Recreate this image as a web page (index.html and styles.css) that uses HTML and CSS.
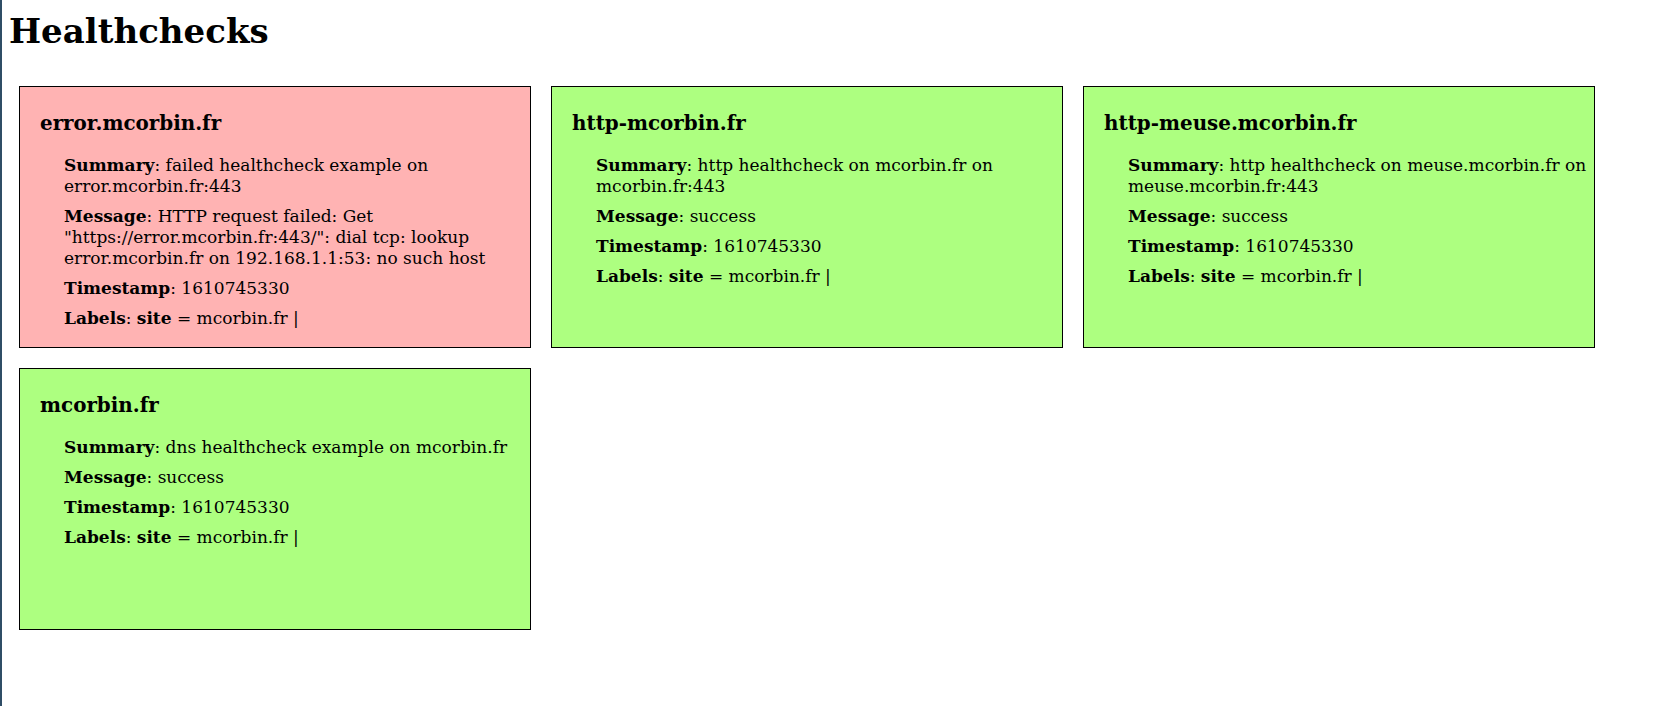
FILE: index.html
```html
<!DOCTYPE html>
<html>
<head>
<meta charset="utf-8">
<title>Healthchecks</title>
<link rel="stylesheet" href="styles.css">
</head>
<body>
<h1 class="title">Healthchecks</h1>
<div class="grid">
  <div class="card card-failure">
    <h3 class="card-name">error.mcorbin.fr</h3>
    <ul class="fields">
      <li><b>Summary</b>: failed healthcheck example on error.mcorbin.fr:443</li>
      <li><b>Message</b>: HTTP request failed: Get "https://error.mcorbin.fr:443/": dial tcp: lookup error.mcorbin.fr on 192.168.1.1:53: no such host</li>
      <li><b>Timestamp</b>: 1610745330</li>
      <li><b>Labels</b>: <b>site</b> = mcorbin.fr |</li>
    </ul>
  </div>
  <div class="card card-success">
    <h3 class="card-name">http-mcorbin.fr</h3>
    <ul class="fields">
      <li><b>Summary</b>: http healthcheck on mcorbin.fr on mcorbin.fr:443</li>
      <li><b>Message</b>: success</li>
      <li><b>Timestamp</b>: 1610745330</li>
      <li><b>Labels</b>: <b>site</b> = mcorbin.fr |</li>
    </ul>
  </div>
  <div class="card card-success">
    <h3 class="card-name">http-meuse.mcorbin.fr</h3>
    <ul class="fields">
      <li><b>Summary</b>: http healthcheck on meuse.mcorbin.fr on meuse.mcorbin.fr:443</li>
      <li><b>Message</b>: success</li>
      <li><b>Timestamp</b>: 1610745330</li>
      <li><b>Labels</b>: <b>site</b> = mcorbin.fr |</li>
    </ul>
  </div>
  <div class="card card-success">
    <h3 class="card-name">mcorbin.fr</h3>
    <ul class="fields">
      <li><b>Summary</b>: dns healthcheck example on mcorbin.fr</li>
      <li><b>Message</b>: success</li>
      <li><b>Timestamp</b>: 1610745330</li>
      <li><b>Labels</b>: <b>site</b> = mcorbin.fr |</li>
    </ul>
  </div>
</div>
</body>
</html>
```
FILE: styles.css
```css
html {
  border-left: 2px solid #2f4d66;
  min-height: 100%;
  box-sizing: border-box;
}
body {
  margin: 0 0 0 7px;
  font-family: "DejaVu Serif", serif;
  font-size: 17px;
  color: #000;
  background: #fff;
}
.title {
  font-size: 34px;
  font-weight: bold;
  margin: 10.5px 0 25px;
}
.grid {
  display: flex;
  flex-wrap: wrap;
  width: 1596px;
}
.card {
  box-sizing: border-box;
  width: 512px;
  height: 262px;
  margin: 10px;
  padding: 20px 0 0 20px;
  border: 1px solid #000;
}
.card-failure {
  background: #ffb3b3;
}
.card-success {
  background: #adff80;
}
.card-name {
  font-size: 19.89px;
  margin: 4.5px 0 19.5px;
}
.fields {
  list-style: none;
  margin: 0;
  padding: 0 0 0 24px;
  line-height: 21px;
}
.fields li {
  margin-bottom: 9px;
}
```
